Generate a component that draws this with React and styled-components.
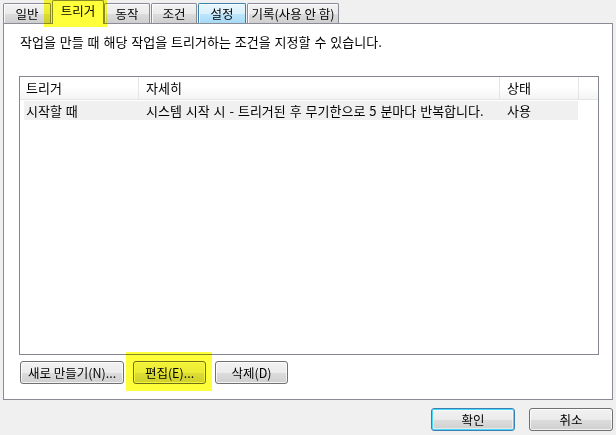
import React from 'react';
import styled, { createGlobalStyle, css } from 'styled-components';

const GlobalStyle = createGlobalStyle`
  html, body {
    margin: 0;
    padding: 0;
    background: #f0f0f0;
  }
  body {
    font-family: "Noto Sans CJK KR", "Liberation Sans", sans-serif;
    font-size: 13px;
    word-spacing: 1px;
    color: #000;
  }
`;

const Window = styled.div`
  position: relative;
  width: 616px;
  height: 435px;
  background: #f0f0f0;
  display: flex;
  flex-direction: column;
  overflow: hidden;
`;

const TabStrip = styled.div`
  display: flex;
  align-items: flex-end;
  height: 23px;
  padding-left: 3px;
  position: relative;
  z-index: 2;
`;

const Tab = styled.div`
  box-sizing: border-box;
  width: ${(p) => p.w}px;
  height: 20px;
  margin-right: ${(p) => p.gap ?? 1}px;
  border: 1px solid #898c95;
  border-bottom: none;
  border-radius: 2px 2px 0 0;
  display: flex;
  align-items: center;
  justify-content: center;
  font-size: 12.5px;
  word-spacing: 0;
  line-height: 16px;
  padding-top: 1px;
  white-space: nowrap;
  background: linear-gradient(#f2f2f2 0%, #ebebeb 50%, #dddddd 51%, #cfcfcf 100%);
  box-shadow: inset 1px 1px 0 rgba(255, 255, 255, 0.8);

  ${(p) =>
    p.hover &&
    css`
      background: linear-gradient(#eaf6fd 0%, #d9f0fc 50%, #bee6fd 51%, #a7d9f5 100%);
      border-color: #3c7fb1;
    `}

  ${(p) =>
    p.active &&
    css`
      height: 24px;
      margin-bottom: -1px;
      padding-top: 0;
      padding-bottom: 4px;
      background: #fff;
      box-shadow: none;
    `}
`;

const Panel = styled.div`
  box-sizing: border-box;
  margin: 0 3px;
  height: 377px;
  background: #fff;
  border: 1px solid #898c95;
  display: flex;
  flex-direction: column;
  padding: 0 13px 15px 15px;
  position: relative;
  z-index: 1;
`;

const Description = styled.div`
  padding: 10px 0 0 1px;
  line-height: 16px;
  white-space: nowrap;
`;

const ListBox = styled.div`
  box-sizing: border-box;
  margin-top: 26px;
  height: 279px;
  border: 1px solid #828790;
  background: #fff;
`;

const Columns = '115px 361px 78px';

const HeaderRow = styled.div`
  display: grid;
  grid-template-columns: 119px 361px 79px 1fr;
  height: 23px;
  background: linear-gradient(#ffffff 0%, #ffffff 45%, #f3f4f6 100%);
  border-bottom: 1px solid #e5e5e5;
  box-sizing: border-box;
`;

const HeaderCell = styled.div`
  box-sizing: border-box;
  border-right: ${(p) => (p.last ? 'none' : '1px solid #e5e5e5')};
  padding-left: ${(p) => p.pad}px;
  padding-bottom: 1px;
  display: flex;
  align-items: center;
  white-space: nowrap;
`;

const DataRow = styled.div`
  display: grid;
  grid-template-columns: ${Columns};
  height: 19px;
  margin: 1px 0 0 4px;
  width: 554px;
  background: #f0f0f0;
`;

const Cell = styled.div`
  padding-left: ${(p) => p.pad}px;
  padding-bottom: 1px;
  display: flex;
  align-items: center;
  white-space: nowrap;
`;

const ButtonRow = styled.div`
  display: flex;
  gap: ${(p) => p.gap}px;
  margin-top: ${(p) => p.top || 0}px;
  padding-left: ${(p) => p.left || 0}px;
  justify-content: ${(p) => (p.right ? 'flex-end' : 'flex-start')};
  padding-right: ${(p) => (p.right ? 3 : 0)}px;
`;

const Button = styled.button`
  box-sizing: border-box;
  width: ${(p) => p.w}px;
  height: 23px;
  padding: 0;
  border: 1px solid #707070;
  border-radius: 3px;
  font-family: inherit;
  font-size: 12.5px;
  word-spacing: 0;
  color: #000;
  white-space: nowrap;
  background: linear-gradient(#f2f2f2 0%, #ebebeb 50%, #dddddd 51%, #cfcfcf 100%);
  box-shadow: inset 0 0 0 1px rgba(255, 255, 255, 0.75);
  display: flex;
  align-items: center;
  justify-content: center;
  line-height: 16px;

  ${(p) =>
    p.primary &&
    css`
      border-color: #3c7fb1;
      box-shadow: inset 0 0 0 1px #48d8fb, inset 0 0 0 2px rgba(255, 255, 255, 0.5);
    `}
`;

const Highlight = styled.div`
  position: absolute;
  left: ${(p) => p.x}px;
  top: ${(p) => p.y}px;
  width: ${(p) => p.w}px;
  height: ${(p) => p.h}px;
  background: #ffff3a;
  mix-blend-mode: multiply;
  z-index: 5;
  pointer-events: none;
`;

const tabs = [
  { label: '일반', w: 48 },
  { label: '트리거', w: 52, active: true },
  { label: '동작', w: 46 },
  { label: '조건', w: 46 },
  { label: '설정', w: 48, hover: true },
  { label: '기록(사용 안 함)', w: 92 },
];

export default function App() {
  return (
    <Window>
      <GlobalStyle />
      <TabStrip>
        {tabs.map((t) => (
          <Tab key={t.label} w={t.w} active={t.active} hover={t.hover} gap={t.active ? 0 : 1}>
            {t.label}
          </Tab>
        ))}
      </TabStrip>
      <Panel>
        <Description>작업을 만들 때 해당 작업을 트리거하는 조건을 지정할 수 있습니다.</Description>
        <ListBox>
          <HeaderRow>
            <HeaderCell pad={6}>트리거</HeaderCell>
            <HeaderCell pad={7}>자세히</HeaderCell>
            <HeaderCell pad={7}>상태</HeaderCell>
            <HeaderCell last />
          </HeaderRow>
          <DataRow>
            <Cell pad={2}>시작할 때</Cell>
            <Cell pad={7}>시스템 시작 시 - 트리거된 후 무기한으로 5 분마다 반복합니다.</Cell>
            <Cell pad={7}>사용</Cell>
          </DataRow>
        </ListBox>
        <ButtonRow gap={9} top={6} left={1}>
          <Button w={104}>새로 만들기(N)...</Button>
          <Button w={73}>편집(E)...</Button>
          <Button w={73}>삭제(D)</Button>
        </ButtonRow>
      </Panel>
      <ButtonRow gap={14} top={8} right>
        <Button w={84} primary>확인</Button>
        <Button w={84}>취소</Button>
      </ButtonRow>
      <Highlight x={44} y={0} w={63} h={27} />
      <Highlight x={126} y={352} w={86} h={39} />
    </Window>
  );
}
